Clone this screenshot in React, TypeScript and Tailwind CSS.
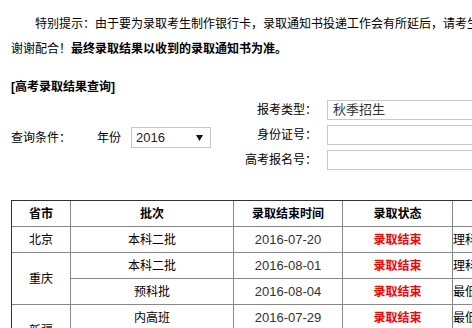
import React from 'react';

const font = { fontFamily: '"Liberation Sans", "Noto Sans CJK SC", sans-serif' };

const rows = [
  { province: '北京', span: 1, batch: '本科二批', date: '2016-07-20', note: '理科第一志愿投档线' },
  { province: '重庆', span: 2, batch: '本科二批', date: '2016-08-01', note: '理科第一志愿投档线' },
  { province: null, span: 0, batch: '预科批', date: '2016-08-04', note: '最低控制分数线' },
  { province: '新疆', span: 2, batch: '内高班', date: '2016-07-29', note: '最低控制分数线' },
  { province: null, span: 0, batch: '区内初中班', date: '2016-08-02', note: '最低控制分数线' },
];

function Cell({ children, className = '' }: { children?: React.ReactNode; className?: string }) {
  return (
    <div className={`flex items-center justify-center border-r border-b border-[#888] text-[12px] leading-[16px] ${className}`}>
      {children}
    </div>
  );
}

export default function App() {
  return (
    <div className="w-[472px] h-[328px] overflow-hidden bg-white text-black" style={font}>
      <div className="w-[1000px] pl-[11px]">
        {/* notice */}
        <p className="pt-[12px] text-[12px] leading-[25px] indent-[24px]">
          特别提示：由于要为录取考生制作银行卡，录取通知书投递工作会有所延后，请考生耐心等待，
          <br />
          谢谢配合！<b>最终录取结果以收到的录取通知书为准。</b>
        </p>

        <div className="mt-[15px] text-[12px] leading-[20px] font-bold">[高考录取结果查询]</div>

        {/* query form */}
        <div className="mt-[3px] flex text-[12px]">
          <div className="w-[234px] mt-[27px] flex items-center h-[21px]">
            <span className="w-[86px]">查询条件：</span>
            <span className="w-[34px]">年份</span>
            <div className="w-[80px] h-[21px] border border-[#c8c8c8] flex items-center justify-between pl-[4px] pr-[7px]">
              <span className="text-[13px] text-[#222]">2016</span>
              <svg width="7" height="6" viewBox="0 0 7 6">
                <path d="M0 0H7L3.5 6Z" fill="#111" />
              </svg>
            </div>
          </div>
          <div className="flex flex-col gap-[5px]">
            {['报考类型：', '身份证号：', '高考报名号：'].map((label, i) => (
              <div key={label} className="flex items-center h-[20px]">
                <span className="w-[72px] text-right whitespace-nowrap">{label}</span>
                <div className="ml-[10px] w-[220px] h-[20px] border border-[#c8c8c8] flex items-center pl-[5px] text-[13px] text-[#333]">
                  {i === 0 ? '秋季招生' : ''}
                </div>
              </div>
            ))}
          </div>
        </div>

        {/* results table */}
        <div className="mt-[30px] w-[742px] grid grid-cols-[59px_163px_109px_110px_300px] auto-rows-[26px] border-l border-t border-[#333]">
          <Cell className="font-bold">省市</Cell>
          <Cell className="font-bold">批次</Cell>
          <Cell className="font-bold">录取结束时间</Cell>
          <Cell className="font-bold">录取状态</Cell>
          <Cell className="font-bold">备注</Cell>
          {rows.map((r, i) => (
            <React.Fragment key={i}>
              {r.province && <Cell className={r.span === 2 ? 'row-span-2' : ''}>{r.province}</Cell>}
              <Cell>{r.batch}</Cell>
              <Cell className="text-[13px] text-[#333]">{r.date}</Cell>
              <Cell className="font-bold text-[#ff0000]">录取结束</Cell>
              <Cell className="justify-start whitespace-nowrap">{r.note}</Cell>
            </React.Fragment>
          ))}
        </div>
      </div>
    </div>
  );
}
